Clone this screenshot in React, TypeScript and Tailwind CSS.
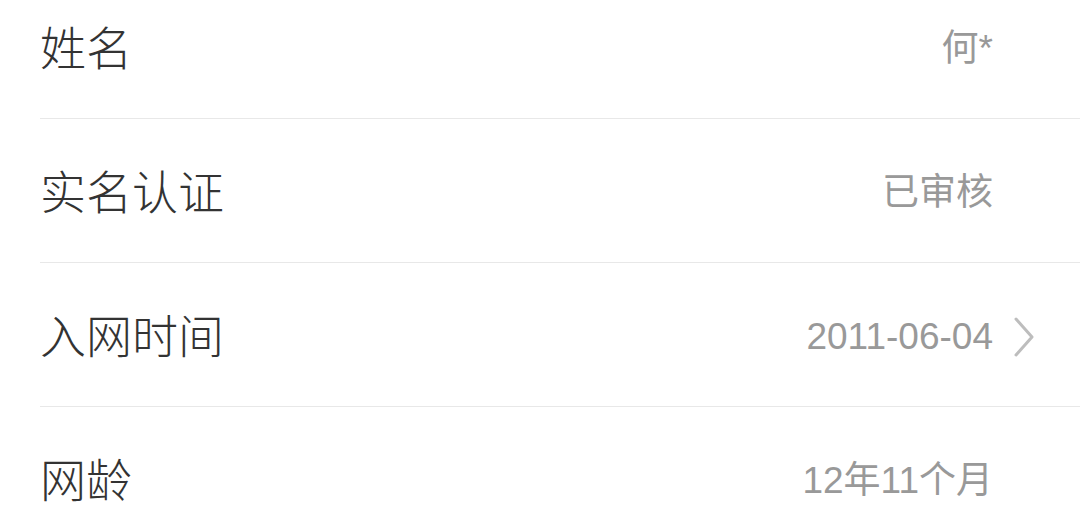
const rows = [
  { label: '姓名', value: '何*', arrow: false },
  { label: '实名认证', value: '已审核', arrow: false },
  { label: '入网时间', value: '2011-06-04', arrow: true },
  { label: '网龄', value: '12年11个月', arrow: false },
];

function Chevron() {
  return (
    <svg width="22" height="40" viewBox="0 0 22 40" className="block">
      <path d="M3 2 L19 20 L3 38" fill="none" stroke="#bdbdbd" strokeWidth="3" strokeLinecap="round" strokeLinejoin="round" />
    </svg>
  );
}

export default function App() {
  return (
    <div
      className="w-[1080px] h-[530px] overflow-hidden bg-white"
      style={{ fontFamily: '"Liberation Sans", "Noto Sans CJK SC", sans-serif' }}
    >
      <div className="-mt-[25px]">
        {rows.map((r) => (
          <div
            key={r.label}
            className="ml-[40px] h-[144px] flex items-center justify-between border-b border-[#e8e8e8] pr-[40px] pt-[4px]"
          >
            <span className="text-[46px] leading-none font-light text-[#333333]">{r.label}</span>
            <div className="flex items-center">
              <span className="text-[37px] leading-none text-[#999999]">{r.value}</span>
              <div className="w-[47px] flex items-center pl-[20px]">
                {r.arrow && <Chevron />}
              </div>
            </div>
          </div>
        ))}
      </div>
    </div>
  );
}
